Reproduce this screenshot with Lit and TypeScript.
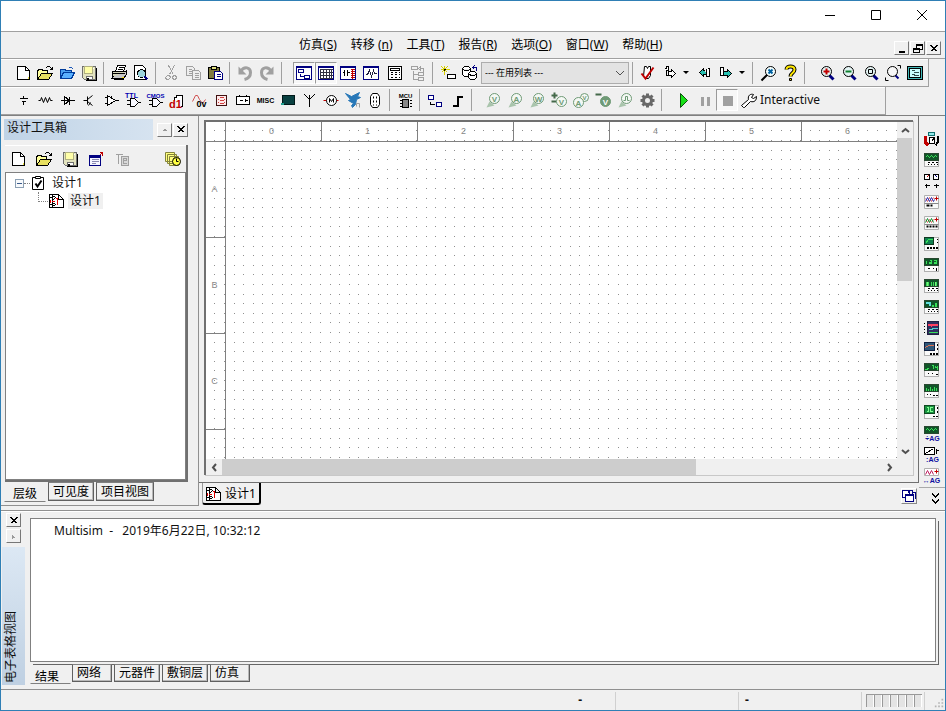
import { LitElement, html, svg, css } from "lit";
import { customElement, property, state } from "lit/decorators.js";
import { classMap } from "lit/directives/class-map.js";

// A stroke is [path, stroke, fill, stroke width]; coordinates are pixel centres of a 16 x 16 grid.
type Stroke = [string, string, string?, number?];
type Glyph = { s: Stroke[]; t?: [string, number, number, string, number][]; smooth?: boolean };

const K = "#000";
const N = "none";
const NAVY = "#000080";
const GREY = "#a0a0a0";
const PROBE = "#6f9a76";
const RED = "#c00000";
const FRAME: Stroke = ["M0 1H15V14H0Z M0 2H15", NAVY, "#fff"];

const probe = (letter: string, extra: Stroke[] = []): Glyph => ({
  smooth: true,
  s: [["M1 15L4 9L9 13Z", N, "#a9c4ac"], ["M14 6A5 5 0 1 1 4 6A5 5 0 1 1 14 6", PROBE, "#f4f8f4"], ...extra],
  t: letter ? [[letter, 9, 9, PROBE, 8]] : [],
});
const lens = (inner: Stroke[]): Glyph => ({
  smooth: true,
  s: [["M10 10L14 14", NAVY, N, 3], ["M12 6A5 5 0 1 1 2 6A5 5 0 1 1 12 6", K, "#e4f4f4"], ...inner],
});

const glyphs: Record<string, Glyph> = {
  file: { s: [["M2 1H10L14 5V14H2Z", K, "#fff"], ["M10 1V5H14", K], ["M12 13H13 M13 11V12", "#e8e040"]] },
  open: { s: [["M0 14V5H1V4H5V5H10V8", K, "#ffff9c"], ["M0 14L4 8H15L11 14Z", K, "#e8e060"], ["M8 3L10 1H12L15 4 M15 1V4H12", K]] },
  openBlue: { s: [["M1 13V4H6V5H12V8", "#003c9c", "#4ba0f0"], ["M1 13L4 7H15L12 13Z", "#003c9c", "#5ab0ff"], ["M9 2H12L14 4", "#1c58b8"]] },
  save: { s: [["M1 1H14V14H3L1 12Z", "#707070", "#e4e4c0"], ["M3 1H11V8H3Z", "#b0b080", "#ffffa8"], ["M5 11H11V14H5Z", "#707070", "#fff"], ["M12 2V3", "#fff"], ["M6 12V14", K, N, 2], ["M15 2V15H4", K]] },
  print: { s: [["M4 6L6 0H14L12 6", K, "#fff"], ["M7 2H12 M6 4H11", K], ["M1 6H14V11H1Z", K, "#d4d4b8"], ["M2 11L0 13H12L15 9V5L13 7", K, "#c8c8c8"], ["M1 8H13 M2 14H12", K], ["M10 12H12", "#ffe000"]] },
  preview: { s: [["M1 0H9L12 3V14H1Z", K, "#fff"], ["M12 8A4 4 0 1 1 4 8A4 4 0 1 1 12 8", K, "#9cd4dc"], ["M11 11L14 14", NAVY, N, 2]] },
  cut: { s: [["M5 0L10 9 M11 0L6 9", GREY], ["M4 10H6L7 12L5 14H3L2 12Z M10 10H12L13 12L12 14H10L9 12Z", GREY]] },
  copy: { s: [["M1 1H7L9 3V10H1Z M3 4H6 M3 6H7 M3 8H7", GREY, "#eee"], ["M7 5H13L15 7V14H7Z M9 8H13 M9 10H13 M9 12H13", GREY, "#eee"]] },
  paste: { s: [["M1 2H12V13H1Z", K, "#807c40"], ["M4 1H9V4H4Z", K, "#e0e080"], ["M7 6H13L15 8V14H7Z", NAVY, "#fff"], ["M9 9H13 M9 11H13", NAVY]] },
  undo: { smooth: true, s: [["M3 6C7 0 13 2 13 7C13 10 11 13 7 14", GREY, N, 3], ["M1 1V9H9Z", N, GREY]] },
  redo: { smooth: true, s: [["M12 6C8 0 2 2 2 7C2 10 4 13 8 14", GREY, N, 3], ["M14 1V9H6Z", N, GREY]] },
  toolbox: { s: [FRAME, ["M2 4H7V7H2Z M8 10H13V13H8Z M4 8V11H7", NAVY, N]] },
  sheet: { s: [FRAME, ["M2 4V13 M5 4V13 M8 4V13 M11 4V13 M13 4V13 M1 4H14 M1 7H14 M1 10H14 M1 13H14", "#303040"]] },
  netlist: { s: [FRAME, ["M2 7H4 M4 4V10 M7 4V10 M7 7H9", K], ["M12 4V13", RED], ["M10 4H14 M10 6H14 M10 8H14 M10 10H14 M10 12H14", RED]] },
  grapher: { s: [FRAME, ["M2 9H4L6 5L8 11L10 5L11 8H13", "#202040"]] },
  post: { s: [["M1 1H14V14H1Z", K, "#fff"], ["M3 3H12V5H3Z", K], ["M3 7H5 M7 7H9 M11 7H12 M3 9H5 M7 9H9 M11 9H12 M3 12H5 M7 12H9 M11 12H12", K]] },
  parent: { s: [["M1 1H7V4H1Z M3 5V14H8 M3 9H8 M8 7H13V10H8Z M8 12H13V15H8Z M10 3H13V6 M10 1V5L8 3Z", GREY]] },
  newComp: { s: [["M4 0V9 M0 4H9 M1 1L7 7 M7 1L1 7", "#d8d000"], ["M4 3V5 M3 4H5", K], ["M7 9H15V13H7Z", K, "#fff"]] },
  database: { s: [["M0 3L2 1H6L8 3L6 5H2ZV9L2 11H6L8 9V3", K, "#fff"], ["M6 8L8 6H12L14 8L12 10H8ZV12L8 14H12L14 12V8", K, "#fff"], ["M14 5V2H10 M12 0L10 2L12 4", NAVY]] },
  rules: { smooth: true, s: [["M4 1H6L7 3L8 1H10V10L8 13H5L3 11Z", K, "#fff"], ["M1 8L5 13L13 2", RED, N, 2]] },
  forward: { s: [["M2 3H4V1H6V5H4V10H6", K, "#fff"], ["M6 6H9V4L13 8L9 12V10H6Z", K, "#fff"]] },
  back: { s: [["M8 5H7V3L3 7L7 11V9H10", K, "#28c0b0"], ["M10 3V11H13V3H11", K, "#fff"]] },
  forwardTeal: { s: [["M2 2H5V10H2Z", K, "#fff"], ["M5 6H9V4L13 8L9 12V10H5Z", K, "#28c0b0"]] },
  find: { smooth: true, s: [["M8 8L1 15", K, N, 2], ["M15 6A5 5 0 1 1 5 6A5 5 0 1 1 15 6", K, "#f4ffff"], ["M8 4L12 8 M12 4L8 8", "#0060a0", N, 2]] },
  help: { smooth: true, s: [["M4 4C4 0 12 0 12 4C12 8 8 7 8 11", K, N, 4], ["M4 4C4 0 12 0 12 4C12 8 8 7 8 11", "#ffe800", N, 2], ["M7 13H9V15H7Z", K, "#ffe800"]] },
  zoomIn: lens([["M4 6H10 M7 3V9", RED, N, 2]]),
  zoomOut: lens([["M4 6H10", "#108030", N, 2]]),
  zoomArea: lens([["M5 4H9V8H5Z", K]]),
  zoomFit: { smooth: true, s: [["M10 10L13 13", NAVY, N, 2], ["M12 6A5 5 0 1 1 2 6A5 5 0 1 1 12 6", K, "#f8f8f8"], ["M12 0H15V3 M0 12V15H3", K]] },
  full: { s: [["M0 1H15V14H0Z", K, "#40b8b8"], ["M2 3H13V12H2Z", K, "#c8ffff"], ["M4 5H7 M6 7H11 M4 9H7 M6 10H11", "#305050"]] },

  source: { s: [["M8 3V6 M4 6H12 M6 9H10 M8 9V12", K]] },
  resistor: { smooth: true, s: [["M1 8H3L4 5L6 10L8 5L10 10L12 5L13 8H15", K]] },
  diode: { s: [["M1 8H15 M5 4V12 M10 4V12", K], ["M5 4L10 8L5 12", K]] },
  transistor: { smooth: true, s: [["M2 8H6 M6 4V12 M6 7L11 3 M6 9L11 13 M9 10L7 13", K]] },
  analog: { s: [["M4 3V13L12 8Z M1 5H4 M1 11H4 M12 8H15 M8 3V5", K, "#fff"]] },
  ttl: { s: [["M5 6H9L13 10L9 14H5Z M1 8H5 M1 12H5 M13 10H15", K, "#f8f8ff"]], t: [["TTL", 6, 5, "#0000b0", 7]] },
  cmos: { s: [["M5 6H9L13 10L9 14H5Z M1 8H5 M1 12H5 M13 10H15", K, "#f8f8ff"]], t: [["CMOS", 8, 5, "#0000b0", 6]] },
  digital: { s: [["M5 8V5H7V3H13V14H11", K, "#fff"]], t: [["d1", 6, 15, RED, 11]] },
  mixed: { smooth: true, s: [["M1 9L4 3H6L8 7L11 11L14 7", "#d05050"]], t: [["0v", 10, 14, K, 9]] },
  indicator: { s: [["M3 3H13V13H3Z", "#401010", "#ffe8e8"], ["M6 5H10 M6 8H10 M6 11H10 M5 6V7 M11 6V7 M5 9V10 M11 9V10", "#d04040"]] },
  power: { s: [["M1 4H14V12H1Z M4 2V4 M11 2V4 M4 8H7 M9 8H12 M10 6V9", K, "#fff"]] },
  misc: { s: [], t: [["MISC", 8, 10, K, 7]] },
  periph: { s: [["M3 3H15V12H3Z", "#001818", "#084040"], ["M1 11H4", "#20a090", N, 2]] },
  rf: { s: [["M8 7V14 M3 2L8 7L13 2 M8 2V7", K]] },
  machine: { smooth: true, s: [["M0 8H15", RED], ["M13 8A5 5 0 1 1 3 8A5 5 0 1 1 13 8", K, "#fff"], ["M6 10V6L8 9L10 6V10", K]] },
  eagle: { smooth: true, s: [["M0 1L6 4L14 0L12 4L15 5L11 7L10 12L7 15L6 13L8 11L3 8L5 7Z", "#2878b8", "#2878b8"], ["M11 14V11H14V15", GREY]] },
  connector: { smooth: true, s: [["M5 1H10L12 4V12L10 15H5L3 12V4Z", K, "#fff"], ["M6 4V6 M9 4V6 M6 8V10 M9 8V10 M6 12V13 M9 12V13", K]] },
  mcu: { s: [["M5 7H11V15H5Z", K, "#888"], ["M2 8H4 M2 11H4 M2 14H4 M12 8H14 M12 11H14 M12 14H14", K]], t: [["MCU", 8, 5, K, 6]] },
  block: { s: [["M1 3H6V7H1Z M9 10H14V14H9Z", NAVY, "#fff"], ["M3 9V12H7", K]] },
  bus: { s: [["M3 13H8V4H13", K, N, 2]] },

  pV: probe("V"), pA: probe("A"), pW: probe("W"),
  pPM: { smooth: true, s: [["M0 3H6 M3 0V6 M0 9H5", "#44694a", N, 2], ["M15 9A5 5 0 1 1 5 9A5 5 0 1 1 15 9", PROBE, "#f4f8f4"]], t: [["V", 10, 12, PROBE, 8]] },
  pAV: { smooth: true, s: [["M15 5A4 4 0 1 1 7 5A4 4 0 1 1 15 5", PROBE, "#f4f8f4"], ["M10 10A5 5 0 1 1 0 10A5 5 0 1 1 10 10", PROBE, "#f4f8f4"]], t: [["A", 5, 13, PROBE, 8], ["V", 11, 7, PROBE, 6]] },
  pRef: { smooth: true, s: [["M0 2H6", "#44694a", N, 2], ["M15 9A5 5 0 1 1 5 9A5 5 0 1 1 15 9", PROBE, PROBE]], t: [["V", 10, 12, "#fff", 8]] },
  pDig: probe("", [["M6 8H8V4H10V8H12", PROBE]]),
  gear: { smooth: true, s: [["M8 1V15 M1 8H15 M3 3L13 13 M13 3L3 13", "#686868", N, 3], ["M12 8A4 4 0 1 1 4 8A4 4 0 1 1 12 8", "#686868", "#eee", 3]] },
  play: { smooth: true, s: [["M5 1L12 8L5 15Z", "#085008", "#18e018"]] },
  pause: { s: [["M5 4V13 M11 4V13", GREY, N, 3]] },
  stop: { s: [["M4 4H13V13H4Z", GREY, GREY]] },
  wrench: { smooth: true, s: [["M2 15L0 13L7 7C6 3 9 1 12 2L10 5L12 6L15 4C15 8 13 10 9 9L3 15Z", K, "#fff"]] },

  window: { s: [["M1 4H12V14H1Z", NAVY, "#f4f4ff"], ["M1 5H12", NAVY, N, 2], ["M3 8H10 M3 10H10 M3 12H7", "#8888b0"], ["M11 4L14 1 M11 1H14V4", RED]] },
  text: { s: [["M1 3H8 M4 3V12", GREY], ["M7 5H14V14H7Z", GREY, "#d8d8d8"], ["M9 9H12V7H9V12H12", GREY]] },
  history: { smooth: true, s: [["M0 1H9V10H0Z M2 3H11V12H2Z M4 5H13V14H4Z", "#84843c", "#ffff80"], ["M15 10A4 4 0 1 1 7 10A4 4 0 1 1 15 10", K, "#ffff40"], ["M11 7V10H13", K]] },
  check: { smooth: true, s: [["M2 2H13V14H2Z", K, "#fff"], ["M5 1H10V3H5Z", K, "#fff"], ["M5 8L7 11L11 5", K, N, 2]] },
  design: { s: [["M1 1H10L15 6V14H1Z M10 1V6H15", K, "#fff"], ["M1 4H4V2L7 4L4 7V4 M4 9V13L7 11L4 9 M1 11H4", K], ["M2 6V9 M7 5H9V11H8 M3 8H6", "#e00000"]] },
  cascade: { s: [["M1 2H8V9H1Z", NAVY, "#fff"], ["M4 6H12V13H4Z M4 7H12", NAVY, "#fff"], ["M7 4V2H11 M10 4H14V10 M11 2V5", NAVY]] },
  more: { s: [["M5 3L8 6L11 3 M5 4L8 7L11 4 M5 9L8 12L11 9 M5 10L8 13L11 10", K]] },
};

const SCR: Stroke = ["M0 1H14V8H0Z", "#284830", "#105428"];
const BODY: Stroke = ["M0 1H14V14H0Z", "#b0b0b0", "#fafafa"];
const DOTS: Stroke = ["M3 10H5 M7 10H9 M11 10H13 M3 12H4 M6 12H7 M9 12H10 M12 12H13", K];
const LOW: Stroke = ["M2 11H4 M5 11H7 M8 11H10 M11 11H13", K, N, 2];
const G = "#38e058";
const instruments: [string, Glyph][] = [
  ["万用表", { s: [["M1 4V11L4 14", RED, N, 3], ["M13 4V11L11 14", K, N, 2], ["M4 1H10V4H4Z", "#107070", "#90e8e8"], ["M5 6H10V12H5Z M7 10L10 6", K, "#fff"]] }],
  ["函数发生器", { s: [BODY, SCR, ["M1 5L3 3L5 5L7 3L9 5L11 3L13 5", G], DOTS] }],
  ["功率表", { s: [["M0 1H5V6H0Z M9 1H14V6H9Z", K, "#fff"], ["M2 4L4 2", RED], ["M11 2L13 4", NAVY], ["M0 12H5 M2 10V14 M9 12H14 M12 10V14", K]] }],
  ["示波器", { smooth: true, s: [BODY, ["M1 4L3 7L5 3L7 7L9 3", "#e06060"], ["M1 7L3 3L5 7L7 3L9 7L10 5", "#3030b0"], ["M12 2V6 M10 4H14", RED], ["M2 11H5 M6 11H8", K, N, 2], ["M0 9H14", "#888"]] }],
  ["四通道示波器", { smooth: true, s: [BODY, ["M1 4L3 7L5 4L7 7L9 4", "#e06060"], ["M1 7L3 3L5 7L7 3L9 7", "#109030"], ["M12 2V6 M10 4H14", RED], LOW, ["M0 9H14", "#888"]] }],
  ["波特图仪", { s: [BODY, ["M0 1H9V8H0Z", "#103820", "#108050"], ["M1 7L4 3H8", G], ["M12 3H13 M12 6H13", K], LOW] }],
  ["频率计数器", { s: [BODY, SCR, ["M2 3V6 M5 3H7V5H5V6H7 M9 3H12V6H9 M9 5H12", G], ["M3 11H5 M8 11H9 M12 10V13", K]] }],
  ["字发生器", { s: [BODY, SCR, ["M2 3V7 M4 3V7 M7 3V7 M9 3V7 M12 3V7", G], ["M3 3V7 M11 3V7", "#80f080"], DOTS] }],
  ["逻辑转换器", { s: [BODY, SCR, ["M1 3H5V6", "#60e0e0", N, 2], ["M8 7V5 M11 7V3", G, N, 2], DOTS] }],
  ["逻辑分析仪", { s: [["M3 1H14V14H3Z", "#202040", "#303060"], ["M4 4L7 5L10 4H13", "#ff4060", N, 2], ["M4 9H7L9 8H13", "#50d0d0"], ["M4 12H13", G], ["M0 2V3 M0 5V6 M0 8V9 M0 11V12", K]] }],
  ["伏安特性分析仪", { s: [BODY, ["M0 1H10V9H0Z", "#102040", "#305878"], ["M1 6L4 4H9", "#e07050"], ["M13 2V4 M13 6V8", K], ["M5 12H7 M8 12H10 M11 12H13", K, N, 2]] }],
  ["失真分析仪", { s: [BODY, SCR, ["M1 7L5 6 M7 3H9V6 M11 3V5H13 M13 3V7", G], ["M3 11H4 M7 11H8 M11 12H13", K]] }],
  ["频谱分析仪", { s: [BODY, SCR, ["M2 7V4 M4 7V5 M6 7V3 M8 7V5 M10 7V3 M12 7V4", G], ["M2 11H3 M5 11H6 M8 12H10 M11 12H13", K]] }],
  ["网络分析仪", { s: [BODY, ["M0 1H10V9H0Z", "#104820", "#189040"], ["M2 3H4V7H2 M8 3H6V7H8", "#80ff90"], ["M13 2V4 M13 6V8 M8 12H10 M11 12H13", K]] }],
  ["安捷伦函数发生器", { s: [SCR, ["M1 5L3 3L5 5L7 3L9 5L11 3L13 5", G]], t: [["÷AG", 8, 15, "#1010a0", 7]] }],
  ["安捷伦万用表", { s: [["M0 1H10V8H0Z", K, "#fff"], ["M1 7L9 2", K], ["M12 2V7 M11 4H14", K]], t: [[":AG", 8, 15, "#1010a0", 7]] }],
  ["安捷伦示波器", { smooth: true, s: [["M0 1H14V8H0Z", "#b0b0b0", "#fff"], ["M1 7L3 3L5 7L7 3L9 7", "#c02060"], ["M12 2V6 M10 4H14", RED]], t: [["↔AG", 7, 15, "#1010a0", 7]] }],
];

const drawGlyph = (g: Glyph) => html`<svg class="glyph" viewBox="0 0 16 16" width="16" height="16" aria-hidden="true"
  shape-rendering=${g.smooth ? "auto" : "crispEdges"}>
  <g transform="translate(.5 .5)">
    ${g.s.map(([d, stroke, fill, w]) => svg`<path d=${d} stroke=${stroke} fill=${fill ?? "none"} stroke-width=${w ?? 1} />`)}
    ${(g.t ?? []).map(([label, x, y, fill, size]) => svg`<text x=${x} y=${y} fill=${fill} font-size=${size} text-anchor="middle">${label}</text>`)}
  </g></svg>`;

const glyphCss = css`
  .glyph { display: block; flex: none; overflow: visible; font-family: "Liberation Sans", sans-serif; font-weight: bold; }
  button {
    display: flex; align-items: center; justify-content: center; box-sizing: border-box;
    margin: 0; padding: 0; border: 0; background: none; color: #000; font: inherit;
  }
`;

@customElement("tool-button")
class ToolButton extends LitElement {
  static styles = [glyphCss, css`
    :host { display: block; flex: none; }
    .tool { width: 22px; height: 22px; }
    .tool:hover { background: #e0e8f0; }
    .wide { width: 24px; }
    .pressed { border: 1px solid #999; border-right-color: #fff; border-bottom-color: #fff; background: #f7f7f7; }
  `];
  @property() icon = "file";
  @property() label = "";
  @property({ type: Boolean }) pressed = false;
  @property({ type: Boolean }) wide = false;
  render() {
    return html`<button class=${classMap({ tool: true, wide: this.wide, pressed: this.pressed })}
      aria-label=${this.label}>${drawGlyph(glyphs[this.icon])}</button>`;
  }
}

// "|" is a separator, "v" a drop arrow, a leading "*" a pressed button, a leading "_" a wider one.
const standardTools = "file:新建 open:打开 openBlue:打开样本 save:保存 | print:打印 preview:打印预览 | cut:剪切 copy:复制 paste:粘贴 | undo:撤消 redo:重做 |";
const viewTools = "*toolbox:设计工具箱 *sheet:电子表格视图 netlist:SPICE网表 _grapher:图示仪 _post:后处理器 parent:母电路图 | newComp:元器件向导 database:数据库管理器";
const checkTools = "| rules:电气规则 forward:转移 v back:反向注解 forwardTeal:正向注解 v | find:查找 help:帮助 |";
const zoomTools = "zoomIn:放大 zoomOut:缩小 zoomArea:缩放区域 zoomFit:缩放页面 full:全屏";
const partTools = "source:电源 resistor:基本 diode:二极管 transistor:晶体管 analog:模拟 ttl:TTL cmos:CMOS digital:其他数字 mixed:混合 indicator:指示器 power:功率 misc:其他 periph:外设 rf:射频 machine:机电 eagle:NI connector:连接器 | mcu:MCU | block:层次块 bus:总线 |";
const probeTools = "pV:电压 pA:电流 pW:功率 pPM:差分电压 pAV:电压和电流 pRef:电压参考 pDig:数字 gear:探针设置 |";
const runTools = "play:运行 pause:暂停 *stop:停止";

const tools = (list: string) => list.split(" ").map((item) => {
  if (item === "|") return html`<span class="sep"></span>`;
  if (item === "v") return html`<button class="drop" aria-label="更多"><span class="tri"></span></button>`;
  const [raw, label] = item.split(":");
  return html`<tool-button icon=${raw.replace(/^[*_]/, "")} label=${label}
    ?pressed=${raw[0] === "*"} ?wide=${raw[0] === "_"}></tool-button>`;
});

const menus: [string, string][] = [["仿真", "S"], ["转移 ", "n"], ["工具", "T"], ["报告", "R"], ["选项", "O"], ["窗口", "W"], ["帮助", "H"]];
const steps = [0, 10, 19, 29, 38, 48, 58, 67, 77, 86];

@customElement("app-root")
class AppRoot extends LitElement {
  @state() private sideTab = 0;
  @state() private sheetTab = 0;

  static styles = [glyphCss, css`
    :host {
      display: flex; flex-direction: column; box-sizing: border-box; height: 100vh; min-height: 640px;
      border: 1px solid #2f7fb5; background: #f0f0f0; color: #111;
      font: 12px/16px "Noto Sans", "Noto Sans CJK SC", sans-serif;
    }
    .title { display: flex; flex: none; justify-content: flex-end; height: 31px; box-sizing: border-box; border-bottom: 1px solid #a0a0a0; background: #fff; }
    .title button { width: 46px; height: 28px; }
    .menu { display: flex; flex: none; height: 27px; box-sizing: border-box; border-bottom: 1px solid #a0a0a0; padding-left: 298px; align-items: center; gap: 14px; }
    .menu button { white-space: pre; }
    .mdi { display: flex; margin-left: auto; padding: 6px 4px 0 0; gap: 1px; }
    .small { width: 15px; height: 14px; border: 1px solid #fff; border-right-color: #777; border-bottom-color: #777; background: #f0f0f0; }
    .bar { display: flex; flex: none; align-items: center; align-self: flex-start; height: 28px; box-sizing: border-box; padding-left: 11px; border: solid #a0a0a0; border-width: 0 1px 1px 0; box-shadow: inset 0 1px #fff; }
    .bar.one { width: calc(100% - 16px); }
    .bar.two { width: calc(100% - 59px); padding-bottom: 2px; }
    .sep { flex: none; width: 1px; height: 22px; margin: 0 4px 0 3px; background: #a0a0a0; }
    .drop { width: 12px; height: 22px; justify-content: flex-start; padding-left: 2px; }
    .tri { border: 3px solid transparent; border-top-color: #000; border-bottom: 0; }
    .gap { flex: none; width: 7px; }
    .bar.two .gap { width: 6px; }
    .list { position: relative; width: 148px; height: 22px; flex: none; }
    .list select { appearance: none; width: 100%; height: 22px; border: 1px solid #adadad; border-radius: 0; padding: 0 3px; background: #e3e3e3; color: #000; font: 9px/16px "Noto Sans", "Noto Sans CJK SC", sans-serif; }
    .list svg { position: absolute; right: 4px; top: 7px; pointer-events: none; }
    .main { display: flex; flex: 1; min-height: 0; border-top: 1px solid #808080; box-sizing: border-box; }

    .side { display: flex; flex-direction: column; width: 198px; flex: none; box-sizing: border-box; border: solid #909090; border-width: 0 1px 1px 0; margin-bottom: 4px; padding: 3px 10px 3px 3px; }
    .caption { display: flex; gap: 1px; align-items: center; height: 21px; }
    .caption h2 { flex: 1; margin: 0 3px 0 0; padding: 0 3px; height: 21px; font: inherit; line-height: 18px; background: linear-gradient(90deg, #bfd3e6, #d6e3f0); }
    .panel { display: flex; flex-direction: column; flex: 1; min-height: 0; margin: 5px 0 0 1px; border: solid #707070; border-width: 0 2px 2px 0; }
    .tools { display: flex; height: 26px; align-items: center; gap: 4px; padding: 0 2px; border-top: 1px solid #fff; }
    .tools :last-child { margin-left: auto; }
    .tree { flex: 1; margin: 0; padding: 1px 0 0 9px; border: 1px solid #808080; background: #fff; list-style: none; }
    .tree ul { margin: 0; padding: 0 0 0 23px; list-style: none; }
    .node { display: flex; align-items: center; height: 18px; }
    .node .name { margin-left: 4px; padding: 0 2px; }
    .node .lit { background: #f0f0f0; }
    .expand { width: 9px; height: 9px; border: 1px solid #8ca0b4; background: #f8fafc; }
    .expand::before { content: ""; width: 5px; height: 1px; background: #3a5a8a; }
    .link { width: 6px; border-top: 1px dotted #808080; }
    .elbow { width: 9px; height: 9px; align-self: flex-start; border: dotted #808080; border-width: 0 0 1px 1px; }

    .tabs { display: flex; flex: none; height: 20px; align-items: flex-start; gap: 2px; }
    .tab { height: 19px; min-width: 40px; justify-content: flex-start; padding: 0 4px; border: 1px solid #606060; border-top-color: #808080; box-shadow: inset -1px -1px #b8b8b8; white-space: nowrap; }
    .tab.on { height: 20px; padding: 4px 8px 0 8px; border-color: transparent transparent #808080; box-shadow: none; }

    .centre { display: flex; flex-direction: column; flex: 1; min-width: 0; }
    .frame { display: flex; flex: 1; min-height: 0; box-sizing: border-box; border: solid #707070; border-width: 0 1px 1px 0; padding: 4px 5px 7px; }
    .sheet { display: grid; flex: 1; min-width: 0; grid-template: minmax(0, 1fr) 16px / minmax(0, 1fr) 16px; border: solid #707070; border-width: 2px 0 0 2px; box-shadow: 1px 1px #c8c8c8; }
    .canvas { position: relative; display: grid; grid-template: 20px minmax(0, 1fr) / 20px minmax(0, 1fr); overflow: hidden; background: #fff; color: #888; font: 9px/11px "Liberation Sans", sans-serif; }
    .dots { position: absolute; inset: 0; width: 100%; height: 100%; }
    .corner, .across, .down { position: relative; box-sizing: border-box; border: solid #808080; border-width: 0 0 1px 0; }
    .corner { border-right-width: 1px; }
    .down { border-width: 0 1px 0 0; }
    .across, .down { display: flex; overflow: hidden; }
    .down { flex-direction: column; }
    .mark { flex: none; display: flex; align-items: center; justify-content: center; box-sizing: border-box; }
    .across .mark { width: 96px; border-right: 1px solid #808080; padding-right: 4px; }
    .down .mark { height: 96px; border-bottom: 1px solid #808080; padding: 0 2px 0 0; }
    .scroll { display: flex; background: #f0f0f0; }
    .scroll.v { flex-direction: column; }
    .scroll button { width: 16px; height: 16px; flex: none; }
    .track { flex: 1; display: flex; }
    .v .track { flex-direction: column; }
    .thumb { background: #cdcdcd; }
    .v .thumb { width: 15px; height: 47%; }
    .h .thumb { width: 72%; height: 16px; }
    .docs { display: flex; flex: none; height: 27px; padding: 0 2px 0 3px; align-items: flex-start; justify-content: space-between; }
    .doc { height: 22px; padding: 2px 3px 0 2px; gap: 4px; border: solid #000; border-width: 0 2px 2px 0; border-left: 1px solid #999; border-radius: 0 0 3px 3px; }
    .cascade { width: 16px; height: 16px; margin-top: 5px; border: 1px solid #fff; border-right-color: #888; border-bottom-color: #888; }
    .rack { display: flex; flex-direction: column; align-items: center; width: 26px; flex: none; padding-top: 12px; box-sizing: border-box; }
    .rack button { width: 22px; height: 21px; flex: none; }
    .rack .last { width: 26px; margin-top: 2px; border-top: 1px solid #aaa; padding-left: 6px; height: 20px; }

    .lower { display: flex; height: 179px; flex: none; box-sizing: border-box; border-top: 1px solid #909090; padding-bottom: 4px; box-shadow: inset 0 1px #fff; }
    .grip { display: flex; flex-direction: column; align-items: center; width: 28px; box-sizing: border-box; padding: 2px 4px 0 1px; gap: 2px; }
    .grip h2 { flex: 1; width: 23px; box-sizing: border-box; margin: 2px 0 0; padding: 2px 0; font: inherit; line-height: 18px; writing-mode: vertical-rl; text-orientation: sideways; transform: rotate(180deg); background: linear-gradient(0deg, #dce8f4, #bfd0e2); }
    .results { display: flex; flex-direction: column; flex: 1; min-width: 0; padding: 7px 7px 0 0; }
    .log { flex: 1; border: 1px solid #808080; background: #fff; padding: 4px 23px; white-space: pre; margin: 0 2px 2px 1px; box-shadow: 2px 2px #f0f0f0, 3px 3px #666; }
    .results .tabs { height: 21px; margin-left: 1px; }
    .results .tab { height: 18px; }
    .results .tab.on { height: 20px; padding: 5px 11px 0 4px; margin-right: -1px; }

    .status { display: flex; height: 21px; flex: none; box-sizing: border-box; border-top: 1px solid #909090; padding-top: 2px; font-weight: bold; align-items: stretch; }
    .status span { box-sizing: border-box; padding-left: 6px; border-right: 1px solid #d0d0d0; }
    .status .first { flex: 1; padding-right: 33px; text-align: right; }
    .status .field { width: 123px; }
    .status .meter { display: flex; width: 63px; padding: 2px 0 0 4px; }
    .status i { width: 8px; height: 13px; box-sizing: border-box; border: solid #999; border-width: 1px 0 0 1px; background: #e4e4e4; box-shadow: inset -1px 0 #fff; }
    .corner-grip { width: 20px; box-sizing: border-box; align-self: flex-end; padding: 0 0 2px 8px; }
  `];

  private arrow(d: string) {
    return html`<svg width="9" height="9" viewBox="0 0 9 9" aria-hidden="true"><path d=${d} fill="none" stroke="#505050" stroke-width="2" /></svg>`;
  }

  private tabRow(names: string[], active: number, pick: (i: number) => void) {
    return html`<div class="tabs" role="tablist">${names.map((name, i) => html`
      <button role="tab" aria-selected=${i === active} class=${classMap({ tab: true, on: i === active })}
        @click=${() => pick(i)}>${name}</button>`)}</div>`;
  }

  private smallButton(label: string, d: string, colour = "#000") {
    return html`<button class="small" aria-label=${label}><svg width="11" height="11" viewBox="0 0 11 11" shape-rendering="crispEdges">
      <path d=${d} fill="none" stroke=${colour} stroke-width="1" transform="translate(.5 .5)" /></svg></button>`;
  }

  render() {
    const cross = "M2 2L8 8M3 2L9 8M8 2L2 8M9 2L3 8";
    return html`
      <header class="title">
        <button aria-label="最小化"><svg width="12" height="12"><path d="M1 6.500H11" stroke="#000" /></svg></button>
        <button aria-label="最大化"><svg width="12" height="12"><path d="M1.500 1.500H10.500V10.500H1.500Z" stroke="#000" fill="none" /></svg></button>
        <button aria-label="关闭"><svg width="12" height="12"><path d="M1 1L11 11M11 1L1 11" stroke="#000" /></svg></button>
      </header>
      <nav class="menu">
        ${menus.map(([name, key]) => html`<button>${name}(<u>${key}</u>)</button>`)}
        <div class="mdi">
          ${this.smallButton("最小化文档", "M2 8H8M2 9H8")}
          ${this.smallButton("还原文档", "M4 1H10V6H4ZM4 2H10M1 5H7V9H1ZM1 6H7")}
          ${this.smallButton("关闭文档", cross)}
        </div>
      </nav>
      <div class="bar one" role="toolbar">
        ${tools(standardTools)}<span class="gap"></span>${tools(viewTools)}
        <div class="list">
          <select aria-label="在用列表"><option>--- 在用列表 ---</option></select>
          <svg width="9" height="9" viewBox="0 0 9 9"><path d="M0 2L4 6L8 2" fill="none" stroke="#505050" /></svg>
        </div>
        ${tools(checkTools)}<span class="gap"></span>${tools(zoomTools)}
      </div>
      <div class="bar two" role="toolbar">
        ${tools(partTools)}<span class="gap"></span>${tools(probeTools)}<span class="gap"></span>${tools(runTools)}
        <tool-button icon="wrench" label="仿真设置"></tool-button><span>Interactive</span>
      </div>

      <div class="main">
        <aside class="side">
          <div class="caption"><h2>设计工具箱</h2>
            ${this.smallButton("收起", "M5 4V5M4 5H6M3 6H7", "#999")}
            ${this.smallButton("关闭工具箱", cross)}
          </div>
          <div class="panel">
            <div class="tools">
              ${tools("file:新建 open:打开 save:保存 window:关闭 text:重命名 history:历史")}
            </div>
            <ul class="tree">
              <li>
                <div class="node"><button class="expand" aria-label="折叠"></button><span class="link"></span>${drawGlyph(glyphs.check)}<span class="name">设计1</span></div>
                <ul><li class="node"><span class="elbow"></span>${drawGlyph(glyphs.design)}<span class="name lit">设计1</span></li></ul>
              </li>
            </ul>
          </div>
          ${this.tabRow(["层级", "可见度", "项目视图"], this.sideTab, (i) => (this.sideTab = i))}
        </aside>

        <section class="centre">
          <div class="frame"><div class="sheet">
            <div class="canvas">
              <svg class="dots" aria-hidden="true"><defs>
                <pattern id="grid" x="18" y="18" width="96" height="96" patternUnits="userSpaceOnUse">
                  ${steps.map((y) => steps.map((x) => svg`<rect x=${x} y=${y} width="1" height="1" fill="#909090" />`))}
                </pattern></defs><rect width="100%" height="100%" fill="url(#grid)" /></svg>
              <div class="corner"></div>
              <div class="across">${Array.from({ length: 7 }, (_, i) => html`<span class="mark">${i}</span>`)}</div>
              <div class="down">${[..."ABC"].map((c) => html`<span class="mark">${c}</span>`)}</div>
            </div>
            <div class="scroll v"><button aria-label="向上">${this.arrow("M1 6L4.500 3L8 6")}</button><div class="track"><div class="thumb"></div></div><button aria-label="向下">${this.arrow("M1 3L4.500 6L8 3")}</button></div>
            <div class="scroll h"><button aria-label="向左">${this.arrow("M6 1L3 4.500L6 8")}</button><div class="track"><div class="thumb"></div></div><button aria-label="向右">${this.arrow("M3 1L6 4.500L3 8")}</button></div>
          </div></div>
          <div class="docs">
            <button class="doc">${drawGlyph(glyphs.design)}设计1</button>
            <button class="cascade" aria-label="窗口列表">${drawGlyph(glyphs.cascade)}</button>
          </div>
        </section>

        <div class="rack" role="toolbar">
          ${instruments.map(([name, g]) => html`<button aria-label=${name}>${drawGlyph(g)}</button>`)}
          <button class="last" aria-label="更多仪器">${drawGlyph(glyphs.more)}</button>
        </div>
      </div>

      <section class="lower">
        <div class="grip">
          ${this.smallButton("关闭视图", cross)}
          ${this.smallButton("展开", "M4 3V7M5 4V6M6 5V6", "#999")}
          <h2>电子表格视图</h2>
        </div>
        <div class="results">
          <div class="log">Multisim  -   2019年6月22日, 10:32:12</div>
          ${this.tabRow(["结果", "网络", "元器件", "敷铜层", "仿真"], this.sheetTab, (i) => (this.sheetTab = i))}
        </div>
      </section>

      <footer class="status">
        <span class="first">-</span><span class="field"></span><span class="field">-</span>
        <span class="meter">${[0, 1, 2, 3, 4, 5, 6].map(() => html`<i></i>`)}</span>
        <svg class="corner-grip" width="12" height="12" viewBox="0 0 12 12"><path d="M9 1h2v2h-2zM5 5h2v2h-2zM9 5h2v2h-2zM1 9h2v2h-2zM5 9h2v2h-2zM9 9h2v2h-2z" fill="#b4b4b4" /></svg>
      </footer>`;
  }
}
